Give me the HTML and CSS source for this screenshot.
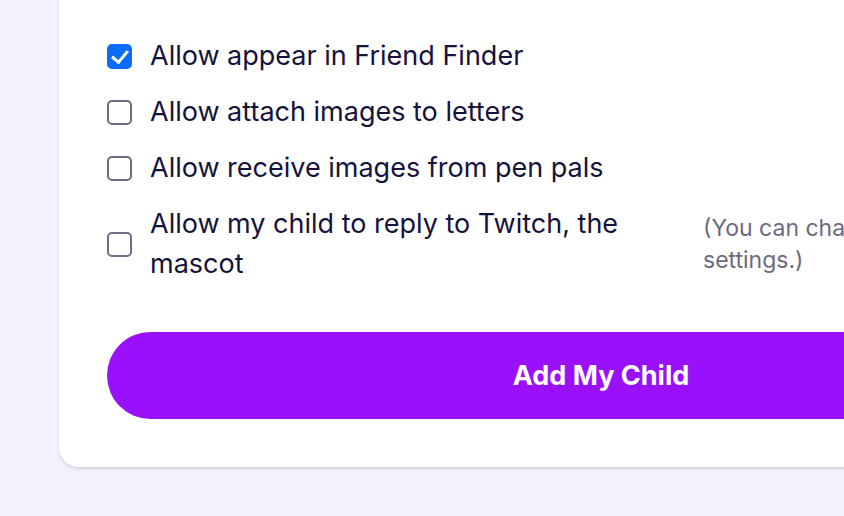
FILE: index.html
```html
<!DOCTYPE html>
<html>
<head>
<meta charset="utf-8">
<link rel="stylesheet" href="styles.css">
</head>
<body>
<div class="page">
  <div class="card">
    <div class="options">
      <label class="option">
        <input type="checkbox" class="box" checked>
        <span class="label">Allow appear in Friend Finder</span>
      </label>
      <label class="option">
        <input type="checkbox" class="box">
        <span class="label">Allow attach images to letters</span>
      </label>
      <label class="option">
        <input type="checkbox" class="box">
        <span class="label">Allow receive images from pen pals</span>
      </label>
      <div class="option option-wide">
        <label class="option-main">
          <input type="checkbox" class="box">
          <span class="label label-wrap">Allow my child to reply to Twitch, the mascot</span>
        </label>
        <span class="hint">(You can change these in your child's settings.)</span>
      </div>
    </div>
    <button class="submit">Add My Child</button>
  </div>
</div>
</body>
</html>
```
FILE: styles.css
```css
html, body {
  margin: 0;
  padding: 0;
}
body {
  background: #f4f1fe;
  font-family: Inter, "Noto Sans", sans-serif;
  color: #15133c;
  overflow: hidden;
  width: 844px;
  height: 516px;
}
.page {
  padding-left: 59px;
}
.card {
  width: 1084px;
  margin-top: -20px;
  box-sizing: border-box;
  padding: 56px 48px 48px 48px;
  background: #fff;
  border-radius: 20px;
  box-shadow: 0 2px 3px rgba(30, 20, 60, 0.14);
}
.options {
  display: flex;
  flex-direction: column;
  gap: 16px;
}
.option {
  display: flex;
  align-items: center;
  min-height: 40px;
}
.option-wide {
  gap: 23px;
}
.option-main {
  display: flex;
  align-items: center;
  width: 573px;
  flex-shrink: 0;
}
.box {
  width: 25px;
  height: 25px;
  margin: 0 18px 0 0;
  flex-shrink: 0;
  appearance: none;
  -webkit-appearance: none;
  border: 2px solid #6e6d82;
  border-radius: 5px;
  background: #fff;
  box-sizing: border-box;
  position: relative;
}
.box:checked {
  background: #0b6cfb;
  border-color: #0b6cfb;
}
.box:checked::after {
  content: "";
  position: absolute;
  left: 6px;
  top: 1px;
  width: 7px;
  height: 13px;
  border: solid #fff;
  border-width: 0 3.5px 3.5px 0;
  transform: rotate(40deg);
}
.label {
  font-size: 27px;
  line-height: 40px;
}
.hint {
  font-size: 23px;
  line-height: 32px;
  color: #6b6a80;
  width: 450px;
  flex-shrink: 0;
}
.submit {
  display: block;
  width: 988px;
  height: 87px;
  margin-top: 48px;
  border: none;
  border-radius: 44px;
  background: #9a10fb;
  color: #fff;
  font-family: Inter, "Noto Sans", sans-serif;
  font-size: 27px;
  font-weight: 700;
}
```
